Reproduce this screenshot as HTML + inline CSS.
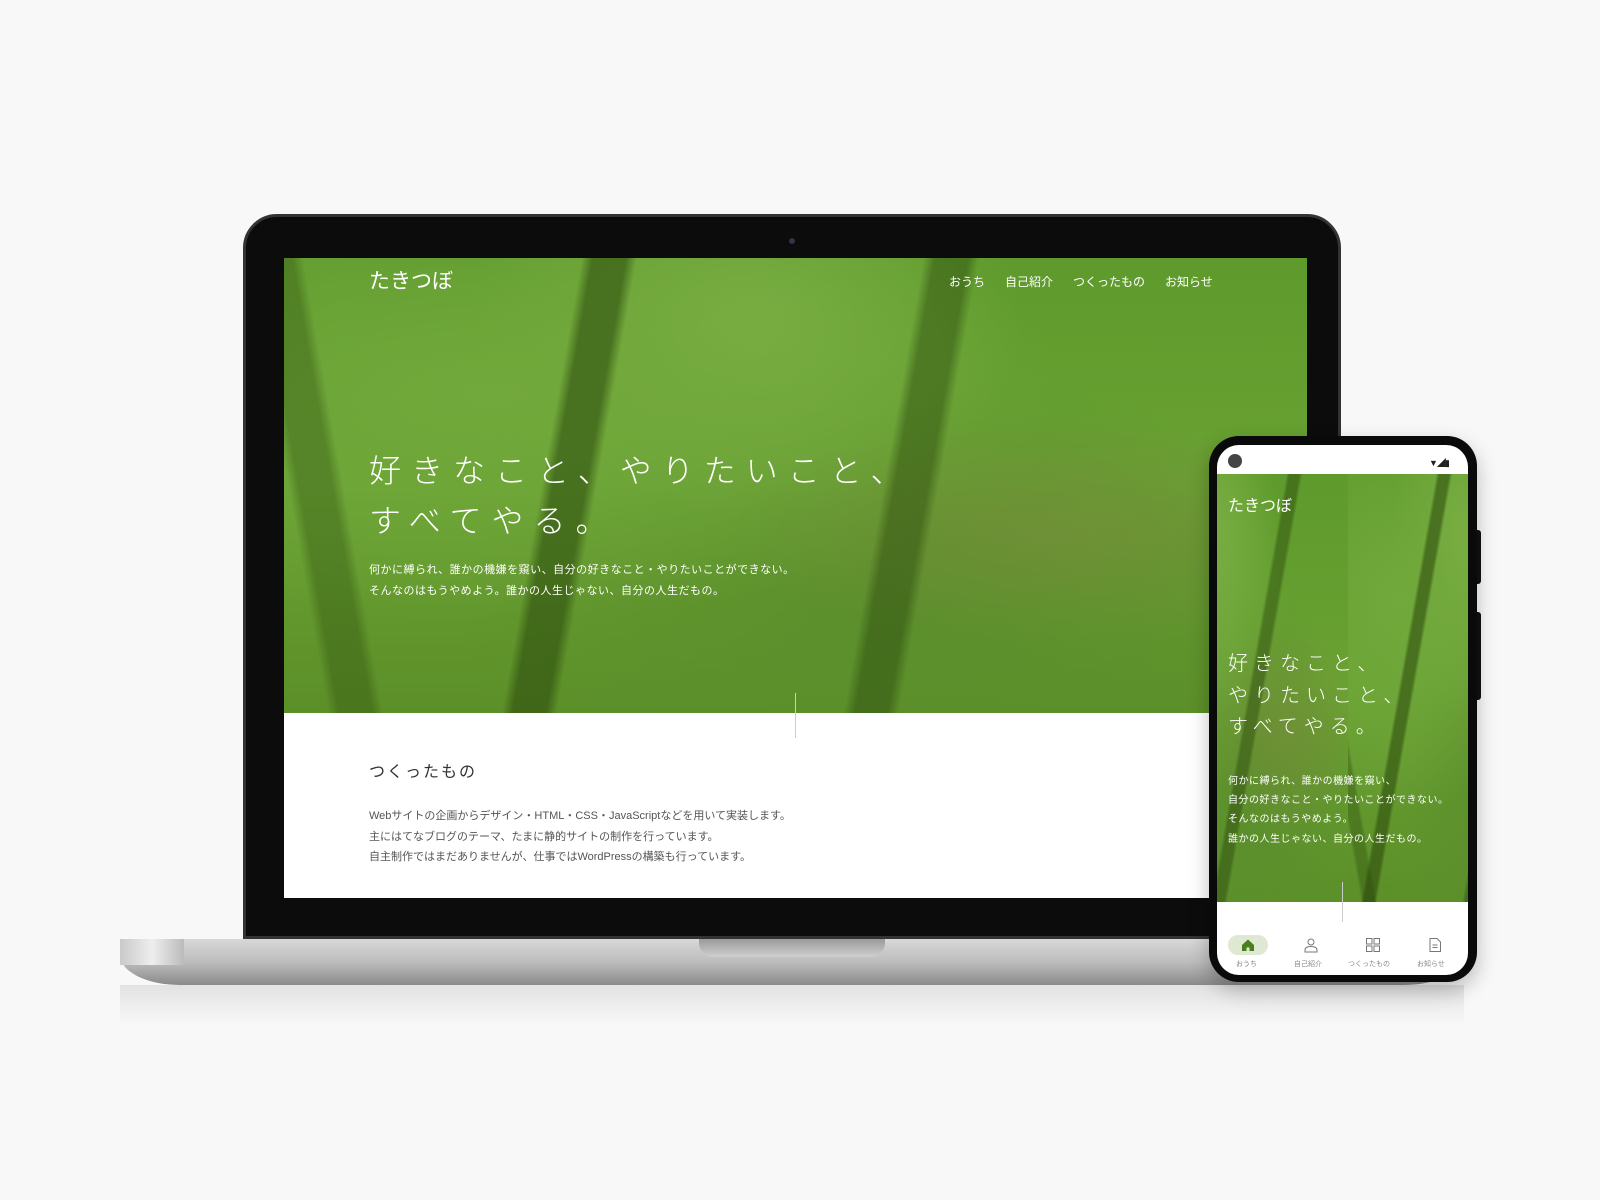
<!DOCTYPE html>
<html><head><meta charset="utf-8"><style>
*{margin:0;padding:0;box-sizing:border-box}
body{width:1600px;height:1200px;background:#f8f8f8;position:relative;overflow:hidden;font-family:"Liberation Sans","Noto Sans CJK JP",sans-serif}
.abs{position:absolute}
.forest{background:
 linear-gradient(100deg,transparent 0 27%,rgba(40,70,10,.55) 28% 31%,transparent 32% 58%,rgba(40,70,10,.45) 59% 62%,transparent 63%),
 linear-gradient(80deg,transparent 0 4%,rgba(40,70,10,.35) 5% 8%,transparent 9%),
 radial-gradient(ellipse at 75% 60%,rgba(120,140,60,.6),transparent 30%),
 radial-gradient(ellipse at 20% 30%,#72a93c,transparent 50%),
 radial-gradient(ellipse at 45% 15%,#7cb046,transparent 35%),
 radial-gradient(ellipse at 60% 80%,#5b8f2c,transparent 50%),
 linear-gradient(180deg,#5e9a2c,#6aa233 50%,#5c8f28);}
.w{color:#fff}
</style></head><body>
<div class="abs" style="left:120px;top:985px;width:1344px;height:40px;background:linear-gradient(#e2e2e2,#f8f8f8)"></div>
<div class="abs" style="left:120px;top:939px;width:1344px;height:46px;border-radius:0 0 60px 60px/0 0 30px 30px;background:linear-gradient(#d8d8d8,#bdbdbd 50%,#8a8a8a)"></div>
<div class="abs" style="left:120px;top:939px;width:64px;height:26px;background:linear-gradient(90deg,#c9c9c9,#eee,#bbb)"></div>
<div class="abs" style="left:699px;top:939px;width:186px;height:18px;border-radius:0 0 14px 14px;background:linear-gradient(#9a9a9a,#d0d0d0)"></div>
<div class="abs" style="left:243px;top:214px;width:1098px;height:725px;background:#0c0c0c;border-radius:34px 34px 0 0;border:3px solid #333"></div>
<div class="abs" style="left:789px;top:238px;width:6px;height:6px;border-radius:50%;background:#334"></div>
<div class="abs" style="left:284px;top:258px;width:1023px;height:640px;background:#fff;overflow:hidden">
 <div class="abs forest" style="left:0;top:0;width:1023px;height:455px"></div>
 <div class="abs w" style="left:85px;top:10px;font-size:21px;line-height:28px">たきつぼ</div>
 <div class="abs w" style="left:665px;top:15px;font-size:12px">
  <span style="margin-right:20px">おうち</span><span style="margin-right:20px">自己紹介</span><span style="margin-right:20px">つくったもの</span><span>お知らせ</span></div>
 <div class="abs w" style="left:85px;top:188px;font-size:32px;line-height:50px;letter-spacing:10px;font-weight:300">好きなこと、やりたいこと、<br>すべてやる。</div>
 <div class="abs w" style="left:85px;top:302px;font-size:11px;line-height:21px;letter-spacing:.5px">何かに縛られ、誰かの機嫌を窺い、自分の好きなこと・やりたいことができない。<br>そんなのはもうやめよう。誰かの人生じゃない、自分の人生だもの。</div>
 <div class="abs" style="left:511px;top:435px;width:1px;height:45px;background:#ccc"></div>
 <div class="abs" style="left:85px;top:500px;font-size:16px;color:#333;letter-spacing:2px">つくったもの</div>
 <div class="abs" style="left:85px;top:548px;font-size:11px;line-height:20.5px;color:#555">Webサイトの企画からデザイン・HTML・CSS・JavaScriptなどを用いて実装します。<br>主にはてなブログのテーマ、たまに静的サイトの制作を行っています。<br>自主制作ではまだありませんが、仕事ではWordPressの構築も行っています。</div>
</div>
<div class="abs" style="left:1474px;top:530px;width:7px;height:54px;background:#111;border-radius:3px"></div>
<div class="abs" style="left:1474px;top:612px;width:7px;height:88px;background:#111;border-radius:3px"></div>
<div class="abs" style="left:1209px;top:436px;width:268px;height:546px;background:#0a0a0a;border-radius:30px;box-shadow:0 8px 20px rgba(0,0,0,.25)"></div>
<div class="abs" style="left:1217px;top:445px;width:251px;height:530px;background:#fff;border-radius:22px;overflow:hidden">
 <div class="abs" style="left:11px;top:9px;width:14px;height:14px;border-radius:50%;background:#444"></div>
 <div class="abs" style="left:212px;top:11px;font-size:9px;color:#222;letter-spacing:-1px">▼◢▮</div>
 <div class="abs forest" style="left:0;top:29px;width:251px;height:428px;background-position:-120px 0"></div>
 <div class="abs w" style="left:11px;top:47px;font-size:16px">たきつぼ</div>
 <div class="abs w" style="left:11px;top:204px;font-size:20px;line-height:31.5px;letter-spacing:6px;font-weight:300">好きなこと、<br>やりたいこと、<br>すべてやる。</div>
 <div class="abs w" style="left:11px;top:327px;font-size:10px;line-height:19.2px;letter-spacing:.5px;white-space:nowrap">何かに縛られ、誰かの機嫌を窺い、<br>自分の好きなこと・やりたいことができない。<br>そんなのはもうやめよう。<br>誰かの人生じゃない、自分の人生だもの。</div>
 <div class="abs" style="left:125px;top:437px;width:1px;height:40px;background:#ccc"></div>
 <div class="abs" style="left:11px;top:490px;width:40px;height:20px;border-radius:10px;background:#dfe8d2"></div>
 <svg class="abs" style="left:24px;top:493px" width="14" height="14" viewBox="0 0 14 14"><path d="M1 7L7 1.5 13 7V13H8.5V9.5h-3V13H1Z" fill="#4a7f1e"/></svg>
 <svg class="abs" style="left:86px;top:492px" width="16" height="16" viewBox="0 0 16 16" fill="none" stroke="#777" stroke-width="1"><circle cx="8" cy="5" r="3"/><path d="M2 15v-2c0-2 2-3.5 6-3.5s6 1.5 6 3.5v2Z"/></svg>
 <svg class="abs" style="left:148px;top:492px" width="16" height="16" viewBox="0 0 16 16" fill="none" stroke="#777" stroke-width="1"><rect x="1.5" y="1.5" width="5.5" height="5.5"/><rect x="9" y="1.5" width="5.5" height="5.5"/><rect x="1.5" y="9" width="5.5" height="5.5"/><rect x="9" y="9" width="5.5" height="5.5"/></svg>
 <svg class="abs" style="left:211px;top:492px" width="14" height="16" viewBox="0 0 14 16" fill="none" stroke="#777" stroke-width="1"><path d="M2 1.5h7l3.5 3.5v9.5H2Z"/><path d="M4.5 8h5M4.5 10.5h5"/></svg>
 <div class="abs" style="top:514px;left:0;width:251px;font-size:7px;color:#888">
  <span class="abs" style="left:19px">おうち</span><span class="abs" style="left:77px">自己紹介</span><span class="abs" style="left:131px">つくったもの</span><span class="abs" style="left:200px">お知らせ</span></div>
</div>
</body></html>
